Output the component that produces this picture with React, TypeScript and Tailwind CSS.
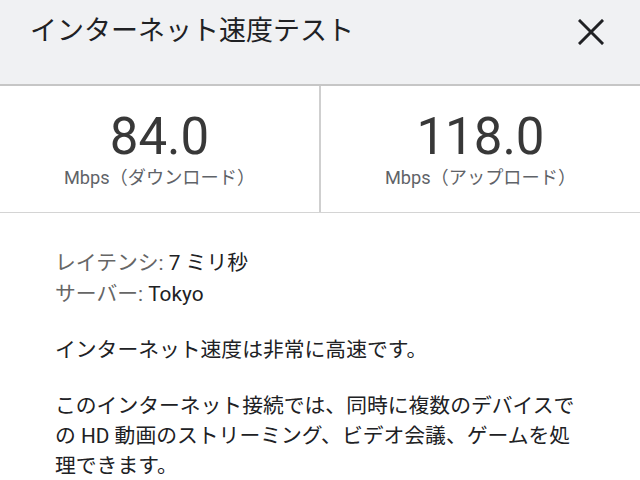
import React from "react";

export default function App() {
  const font = { fontFamily: "Roboto, 'Noto Sans CJK JP', sans-serif" };
  return (
    <div className="w-[640px] h-[480px] bg-white overflow-hidden" style={font}>
      <div className="h-[86px] bg-[#f0f1f3] border-b-2 border-[#c6c6c6] flex items-start justify-between pl-[30px] pr-[36px] pt-[12px]">
        <div className="text-[27px] leading-[38px] text-[#202124]">インターネット速度テスト</div>
        <svg width="26" height="26" viewBox="0 0 26 26" className="mt-[7px]">
          <path d="M2 2 L24 24 M24 2 L2 24" stroke="#202124" strokeWidth="3" strokeLinecap="square" />
        </svg>
      </div>
      <div className="flex h-[127px] border-b border-[#d4d4d4]">
        <div className="flex-1 flex flex-col items-center pt-[22px]">
          <div className="text-[51px] leading-[58px] text-[#383838]" style={{ fontFamily: "Roboto, sans-serif" }}>84.0</div>
          <div className="text-[18.2px] leading-[24px] text-[#5f6368]">Mbps（ダウンロード）</div>
        </div>
        <div className="w-[2px] bg-[#cfcfcf]" />
        <div className="flex-1 flex flex-col items-center pt-[22px]">
          <div className="text-[51px] leading-[58px] text-[#383838]" style={{ fontFamily: "Roboto, sans-serif" }}>118.0</div>
          <div className="text-[18.2px] leading-[24px] text-[#5f6368]">Mbps（アップロード）</div>
        </div>
      </div>
      <div className="px-[55px] pt-[35px] text-[20.8px] text-[#202124]">
        <div className="leading-[31px]">
          <div><span className="text-[#666]">レイテンシ:</span> 7 ミリ秒</div>
          <div><span className="text-[#666]">サーバー:</span> Tokyo</div>
        </div>
        <p className="leading-[30px] mt-[25px]">インターネット速度は非常に高速です。</p>
        <p className="leading-[30px] mt-[26px] w-[530px]">このインターネット接続では、同時に複数のデバイスでの HD 動画のストリーミング、ビデオ会議、ゲームを処理できます。</p>
      </div>
    </div>
  );
}
